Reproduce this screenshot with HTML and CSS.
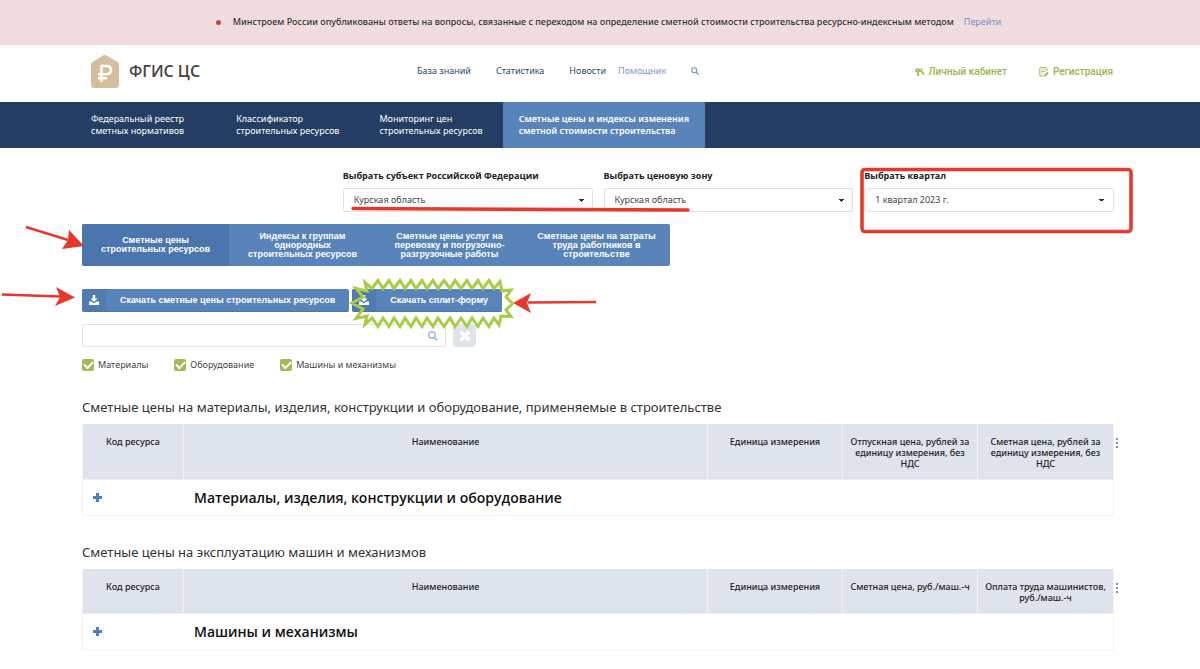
FILE: index.html
```html
<!DOCTYPE html>
<html lang="ru">
<head>
<meta charset="utf-8">
<title>ФГИС ЦС</title>
<link rel="stylesheet" href="styles.css">
</head>
<body>
<div class="page">
  <div class="notice">
    <span class="notice-dot"></span>
    <span class="notice-text">Минстроем России опубликованы ответы на вопросы, связанные с переходом на определение сметной стоимости строительства ресурсно-индексным методом</span>
    <a class="notice-link" href="#">Перейти</a>
  </div>

  <header class="header">
    <a class="brand" href="#">
      <svg class="brand-logo" viewBox="0 0 28 33" width="28" height="33" aria-hidden="true">
        <path d="M12.3 .5Q14 -.4 15.700 .5L26.500 7Q28 8 28 10V29.500Q28 33 24.500 33H3.500Q0 33 0 29.500V10Q0 8 1.500 7Z" fill="#d3bf9d"/>
        <path d="M10.500 27V11H15.500Q20 11 20 15T15.500 19.300H7M7 23.200H16" fill="none" stroke="#fff" stroke-width="2.600"/>
      </svg>
      <span class="brand-name">ФГИС ЦС</span>
    </a>
    <nav class="top-links">
      <a href="#">База знаний</a>
      <a href="#">Статистика</a>
      <a href="#">Новости</a>
      <a class="helper" href="#">Помощник</a>
      <button class="icon-button" aria-label="Поиск">
        <svg viewBox="0 0 8 8" width="8" height="8"><circle cx="3.200" cy="3.200" r="2.500" fill="none" stroke="#6f95c9" stroke-width="1.100"/><path d="M5 5L7.500 7.500" stroke="#6f95c9" stroke-width="1.300"/></svg>
      </button>
    </nav>
    <div class="account">
      <a href="#">
        <svg viewBox="0 0 10 9" width="10" height="9" fill="none" stroke="#9ab54d"><circle cx="2.300" cy="2.500" r="1.500" stroke-width="1.400"/><circle cx="5.800" cy="2.300" r="1.300" stroke-width="1.200"/><path d="M3.400 3.500V8M3.400 6.500H2M6.500 3.500L9.500 6.700M7.500 6L8.600 4.900" stroke-width="1.300"/></svg>
        Личный кабинет</a>
      <a href="#">
        <svg viewBox="0 0 10 10" width="10" height="10" fill="none" stroke="#9ab54d"><path d="M8 4V1.500Q8 .6 7 .6H1.600Q.8 .6 .8 1.500V8Q.8 9 1.700 9H4.500" /><path d="M2.300 2.800H6.500M2.300 4.500H6.500M2.300 6.200H4.500" stroke-width=".7"/><path d="M5.500 9L9 5.500" stroke-width="1.800"/></svg>
        Регистрация</a>
    </div>
  </header>

  <nav class="main-nav">
    <a href="#">Федеральный реестр<br>сметных нормативов</a>
    <a href="#">Классификатор<br>строительных ресурсов</a>
    <a href="#">Мониторинг цен<br>строительных ресурсов</a>
    <a class="active" href="#">Сметные цены и индексы изменения<br>сметной стоимости строительства</a>
  </nav>

  <main class="content">
    <form class="filters">
      <div class="field">
        <label for="region">Выбрать субъект Российской Федерации</label>
        <select id="region"><option>Курская область</option></select>
      </div>
      <div class="field">
        <label for="zone">Выбрать ценовую зону</label>
        <select id="zone"><option>Курская область</option></select>
      </div>
      <div class="field">
        <label for="quarter">Выбрать квартал</label>
        <select id="quarter"><option>1 квартал 2023 г.</option></select>
      </div>
    </form>

    <div class="tabs">
      <button class="active">Сметные цены<br>строительных ресурсов</button>
      <button>Индексы к группам<br>однородных<br>строительных ресурсов</button>
      <button>Сметные цены услуг на<br>перевозку и погрузочно-<br>разгрузочные работы</button>
      <button>Сметные цены на затраты<br>труда работников в<br>строительстве</button>
    </div>

    <div class="downloads">
      <button class="download">
        <span class="download-icon"><svg viewBox="0 0 10 10" width="10" height="10" fill="#fff"><path d="M3.800 0H6.200V3.500H8.500L5 7L1.500 3.500H3.800ZM0 6.500H2.500L5 8.600L7.500 6.500H10V10H0Z"/></svg></span>
        <span class="download-label">Скачать сметные цены строительных ресурсов</span>
      </button>
      <button class="download">
        <span class="download-icon"><svg viewBox="0 0 10 10" width="10" height="10" fill="#fff"><path d="M3.800 0H6.200V3.500H8.500L5 7L1.500 3.500H3.800ZM0 6.500H2.500L5 8.600L7.500 6.500H10V10H0Z"/></svg></span>
        <span class="download-label">Скачать сплит-форму</span>
      </button>
    </div>

    <div class="search">
      <div class="search-box">
        <input type="text" aria-label="Поиск по ресурсам">
        <svg viewBox="0 0 10 10" width="10" height="10"><circle cx="4" cy="4" r="3.200" fill="none" stroke="#9dbcdd" stroke-width="1.500"/><path d="M6.300 6.300L9.300 9.300" stroke="#9dbcdd" stroke-width="1.800"/></svg>
      </div>
      <button class="clear" aria-label="Очистить">
        <svg viewBox="0 0 12 12" width="12" height="12"><path d="M1.800 1.800L10.200 10.200M10.200 1.800L1.800 10.200" stroke="#fff" stroke-width="3.600"/></svg>
      </button>
    </div>

    <div class="checks">
      <label><input type="checkbox" checked>Материалы</label>
      <label><input type="checkbox" checked>Оборудование</label>
      <label><input type="checkbox" checked>Машины и механизмы</label>
    </div>

    <section class="block">
      <h2>Сметные цены на материалы, изделия, конструкции и оборудование, применяемые в строительстве</h2>
      <div class="table-wrap">
        <table>
          <colgroup><col class="c-code"><col><col class="c-side"><col class="c-side"><col class="c-side"></colgroup>
          <thead><tr><th>Код ресурса</th><th>Наименование</th><th>Единица измерения</th><th>Отпускная цена, рублей за единицу измерения, без НДС</th><th>Сметная цена, рублей за единицу измерения, без НДС</th></tr></thead>
          <tbody><tr><td><button class="expand" aria-label="Раскрыть"></button></td><td colspan="4">Материалы, изделия, конструкции и оборудование</td></tr></tbody>
        </table>
        <button class="dots" aria-label="Меню"><i></i><i></i><i></i></button>
      </div>
    </section>

    <section class="block">
      <h2>Сметные цены на эксплуатацию машин и механизмов</h2>
      <div class="table-wrap">
        <table>
          <colgroup><col class="c-code"><col><col class="c-side"><col class="c-side"><col class="c-side"></colgroup>
          <thead><tr><th>Код ресурса</th><th>Наименование</th><th>Единица измерения</th><th>Сметная цена, руб./маш.-ч</th><th>Оплата труда машинистов, руб./маш.-ч</th></tr></thead>
          <tbody><tr><td><button class="expand" aria-label="Раскрыть"></button></td><td colspan="4">Машины и механизмы</td></tr></tbody>
        </table>
        <button class="dots" aria-label="Меню"><i></i><i></i><i></i></button>
      </div>
    </section>
  </main>

  <svg class="marks" viewBox="0 0 1200 669" width="1200" height="669" aria-hidden="true">
    <g fill="none" stroke="#e6382c" stroke-width="3">
      <path d="M353 208.500L688 210" stroke-width="3.400" stroke-linecap="round"/>
      <rect x="862" y="169.500" width="269" height="62" rx="3" stroke-width="3.600"/>
      <path d="M26 227L68 240M2 294.500L60 296.500M528 302.500L596 302" stroke-width="2.400"/>
    </g>
    <g fill="#e6382c">
      <path d="M69 230L84 246L62 249L68 240Z"/>
      <path d="M56 287L75 297.500L55 306L60 297Z"/>
      <path d="M531 293L513 303L531 313L527 303Z"/>
    </g>
    <path d="M365 282.500L372 288.500L378 280.500L383 288.500L389 280.500L394 288.500L400 280.500L405 288.500L411 280.500L416 288.500L422 280.500L427 288.500L433 280.500L438 288.500L444 280.500L450 288.500L455 280.500L461 288.500L467 280.500L472 288.500L478 280.500L483 288.500L489 280.500L494 288.500L500 281.500L502 291L511 290L506 297L512.500 303.500L506 310L511 316.500L501 316L499 325L494 318L489 326.500L483 318L478 326.500L472 318L467 326.500L461 318L455 326.500L450 318L444 326.500L438 318L433 326.500L427 318L422 326.500L416 318L411 326.500L405 318L400 326.500L394 318L389 326.500L383 318L378 326.500L372 318L365 324.500L367 316L356 318.500L363 309L352 303L363 297L356 288.500L367 291Z" fill="none" stroke="#a9cc45" stroke-width="3"/>
  </svg>
</div>
</body>
</html>
```

FILE: styles.css
```css
* { box-sizing: border-box; }
body { margin: 0; background: #fff; color: #333; font: 9px/12px "Noto Sans", sans-serif; }
a { color: inherit; text-decoration: none; }
button { border: 0; padding: 0; background: none; font: inherit; color: inherit; cursor: pointer; }
svg { display: block; flex: none; }
.page { position: relative; }

.notice { display: flex; align-items: center; justify-content: center; min-height: 45px; padding-left: 17px; background: #f0dcdf; border-bottom: 1px solid #ecd9dc; color: #333; }
.notice-dot { width: 5px; height: 5px; margin-right: 12px; border-radius: 50%; background: #cf4045; }
.notice-text { font-weight: 500; }
.notice-link { margin-left: 10px; color: #7690c4; }

.header { display: grid; grid-template-columns: 326px 1fr auto; align-items: center; min-height: 57px; padding: 0 87px 0 91px; }
.brand { display: flex; align-items: center; gap: 10px; padding-bottom: 4px; }
.brand-name { padding-bottom: 2px; font: 600 16px/20px "Open Sans", sans-serif; color: #444; }
.top-links { display: flex; align-items: center; gap: 25px; padding-bottom: 5px; color: #2c4a6e; }
.top-links .helper { margin-left: -13px; color: #7f96c8; }
.account { display: flex; align-items: center; gap: 32px; padding-bottom: 3px; font-family: Roboto, sans-serif; font-size: 10px; font-weight: 500; color: #9ab54d; }
.account a { display: flex; align-items: center; gap: 4px; }

.main-nav { display: flex; min-height: 46px; padding-left: 71px; background: #243e63; color: #fff; }
.main-nav a { display: flex; align-items: center; padding: 0 20px; }
.main-nav a:first-child { padding-right: 32px; }
.main-nav .active { padding: 0 16px; background: #5984b9; font-weight: 600; }

.content { padding: 22px 86px 18px 82px; }
.filters { display: grid; grid-template-columns: repeat(4, 1fr); gap: 11px; }
.field { display: flex; flex-direction: column; gap: 6px; }
.field:first-child { grid-column: 2; }
.field label { font-family: "Open Sans", sans-serif; font-weight: 700; color: #222; }
.field select { height: 24px; padding: 0 10px; border: 1px solid #e2e2e2; border-radius: 2px; appearance: none; font: inherit; color: #444; background: linear-gradient(45deg, transparent 50%, #333 0) no-repeat right 11px center / 3px 3px, linear-gradient(-45deg, transparent 50%, #333 0) no-repeat right 8px center / 3px 3px, #fff; }

.tabs { display: grid; grid-template-columns: repeat(4, 147px); width: max-content; min-height: 42px; margin-top: 12px; border-radius: 2px; overflow: hidden; background: #5984b9; font: 700 9px/9px "Liberation Sans", sans-serif; color: #fff; }
.tabs .active { background: #4a76ad; }

.downloads { display: flex; gap: 3px; margin-top: 23px; }
.download { display: flex; height: 23px; border-radius: 2px; overflow: hidden; background: #5984b9; border-bottom: 1px solid #4a76ad; font: 700 9px/12px "Liberation Sans", sans-serif; color: #fff; }
.download-icon { display: flex; align-items: center; align-self: stretch; padding: 0 7px; background: #507bb0; }
.download-label { align-self: center; padding: 0 14px; }

.search { display: flex; gap: 7px; margin-top: 12px; }
.search-box { display: flex; align-items: center; width: 364px; height: 23px; padding-right: 7px; border: 1px solid #e4e4e4; border-radius: 2px; }
.search-box input { flex: 1; min-width: 0; border: 0; outline: 0; background: none; font: inherit; }
.clear { display: grid; place-items: center; width: 23px; height: 23px; border-radius: 4px; background: #dfe3ec; }

.checks { display: flex; gap: 26px; margin-top: 12px; color: #444; }
.checks label { display: flex; align-items: center; gap: 4px; }
.checks input { appearance: none; display: grid; place-items: center; width: 12px; height: 12px; margin: 0; border-radius: 2px; background: #a5b957; }
.checks input::after { content: ""; width: 7px; height: 4px; margin-bottom: 2px; border: solid #fff; border-width: 0 0 2px 2px; rotate: -45deg; }

.block { margin-top: 26px; }
h2 { margin: 0 0 7px; font-size: 13px; line-height: 20px; font-weight: 400; color: #333; }
.table-wrap { position: relative; }
table { width: 100%; table-layout: fixed; border-collapse: separate; border-spacing: 0; border: 1px solid #f3f3f3; border-top: 0; border-radius: 3px 3px 0 0; }
.c-code { width: 101px; }
.c-side { width: 135px; }
th { padding: 12px 6px 10px; border-right: 1px solid #f1f3f7; border-bottom: 1px solid #eceef3; background: #dfe3ec; line-height: 11px; font-weight: 500; color: #222; vertical-align: top; }
th:last-child { border-right: 0; }
td { height: 35px; padding: 0 10px; font: 600 14px/20px "Open Sans", sans-serif; color: #111; }
.expand { display: block; width: 9px; height: 9px; background: linear-gradient(#4e80b8 0 0) center / 9px 3px no-repeat, linear-gradient(#4e80b8 0 0) center / 3px 9px no-repeat; }
.dots { position: absolute; top: 14px; left: calc(100% + 2px); display: grid; gap: 2px; }
.dots i { width: 2px; height: 2px; background: #7f93ad; }

.marks { position: absolute; top: 0; left: 0; pointer-events: none; }
```
